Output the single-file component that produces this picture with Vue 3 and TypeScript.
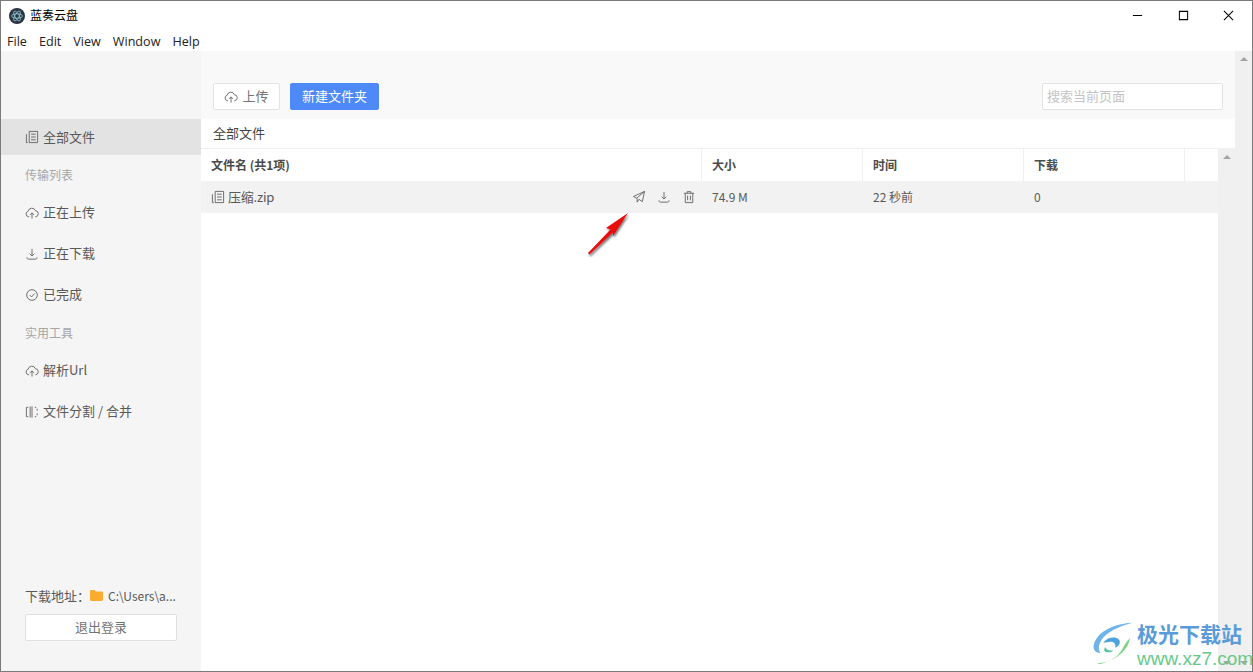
<script setup lang="ts">
interface NavItem {
  label: string
  icon?: string
  title?: boolean
  active?: boolean
}

const menus = ['File', 'Edit', 'View', 'Window', 'Help']

const navItems: NavItem[] = [
  { label: '全部文件', icon: 'file', active: true },
  { label: '传输列表', title: true },
  { label: '正在上传', icon: 'upload' },
  { label: '正在下载', icon: 'download' },
  { label: '已完成', icon: 'done' },
  { label: '实用工具', title: true },
  { label: '解析Url', icon: 'upload' },
  { label: '文件分割 / 合并', icon: 'split' },
]

const icons: Record<string, string> = {
  file: 'M1.500 4.500v9h1.500M4.500 1.500h9v12h-9zM6.500 4.500h5M6.500 7.500h5M6.500 10.500h5',
  upload: 'M4.500 11.500H4a3 3 0 0 1-.6-5.900 4 4 0 0 1 7.700-.6 3.300 3.300 0 0 1 .6 6.500h-.7M7.500 13.500V7.500M5.400 9.500l2.100-2.200 2.100 2.200',
  download: 'M7.500 2v7.500M5 7.200l2.500 2.500L10 7.200M2 11c0 1.500 1 2 2 2h7c1 0 2-.5 2-2',
  done: 'M7.500 1.800a5.700 5.700 0 1 0 0 11.400 5.700 5.700 0 0 0 0-11.400zM5 7.600l2 2 3.200-3.600',
  split: 'M3.500 2.500h-2v10h2M5.500 1.500v12M7.500 1.500v12M10.500 2.500h1.500M10.500 12.500h1.500M13 4v2M13 9v2',
  send: 'M13.500 1.500 1.500 7l3.500 1.800L13.500 1.500 11 12.500 7.500 10 5.500 13V9',
  trash: 'M2 3.500h11M5.500 3.500V1.800h4v1.700M3.500 3.500v10h8v-10M6 6v5M9 6v5',
}
</script>

<template>
  <div class="window">
    <header class="titlebar">
      <svg class="app-logo" viewBox="0 0 16 16">
        <circle cx="8" cy="8" r="8" fill="#2b3240" />
        <g fill="none" stroke="#9fdcea" stroke-width=".7">
          <ellipse cx="8" cy="8" rx="5.500" ry="2.200" />
          <ellipse cx="8" cy="8" rx="5.500" ry="2.200" transform="rotate(60 8 8)" />
          <ellipse cx="8" cy="8" rx="5.500" ry="2.200" transform="rotate(120 8 8)" />
        </g>
      </svg>
      <span class="app-name">蓝奏云盘</span>
      <div class="win-controls">
        <svg viewBox="0 0 12 12"><path d="M1 6h10" /></svg>
        <svg viewBox="0 0 12 12"><path d="M1.500 1.500h9v9h-9z" /></svg>
        <svg viewBox="0 0 12 12"><path d="M1 1l10 10M11 1 1 11" /></svg>
      </div>
    </header>
    <nav class="menubar">
      <span v-for="menu in menus" :key="menu">{{ menu }}</span>
    </nav>

    <div class="body">
      <aside class="sidebar">
        <ul class="nav">
          <li
            v-for="item in navItems"
            :key="item.label"
            :class="{ 'nav__title': item.title, 'nav__item': !item.title, 'nav__item--active': item.active }"
          >
            <svg v-if="item.icon" class="icon" viewBox="0 0 15 15"><path :d="icons[item.icon]" /></svg>
            {{ item.label }}
          </li>
        </ul>
        <div class="sidebar__footer">
          <div class="path">
            <span>下载地址：</span>
            <svg class="folder" viewBox="0 0 13 11">
              <path d="M0 1.200C0 .5.5 0 1.200 0h3.200l1.300 1.500h6.100c.7 0 1.200.5 1.200 1.200v7c0 .7-.5 1.200-1.200 1.200H1.200C.5 10.900 0 10.400 0 9.700z" fill="#fbab2e" />
            </svg>
            <span class="path__value">C:\Users\a...</span>
          </div>
          <button class="logout">退出登录</button>
        </div>
      </aside>

      <main class="main">
        <div class="toolbar">
          <button class="btn">
            <svg class="icon" viewBox="0 0 15 15"><path :d="icons.upload" /></svg>
            上传
          </button>
          <button class="btn btn--primary">新建文件夹</button>
          <input class="search" placeholder="搜索当前页面" />
        </div>
        <div class="crumb">全部文件</div>

        <div class="table-wrap">
          <div class="table">
            <div class="row row--head">
              <div class="cell cell--name">文件名 (共1项)</div>
              <div class="cell cell--col">大小</div>
              <div class="cell cell--col">时间</div>
              <div class="cell cell--col">下载</div>
              <div class="cell cell--end"></div>
            </div>
            <div class="row row--file">
              <div class="cell cell--name">
                <svg class="icon" viewBox="0 0 15 15"><path :d="icons.file" /></svg>
                <span class="file-name">压缩.zip</span>
                <div class="actions">
                  <svg class="icon" viewBox="0 0 15 15"><path :d="icons.send" /></svg>
                  <svg class="icon" viewBox="0 0 15 15"><path :d="icons.download" /></svg>
                  <svg class="icon" viewBox="0 0 15 15"><path :d="icons.trash" /></svg>
                </div>
              </div>
              <div class="cell cell--col">74.9 M</div>
              <div class="cell cell--col">22 秒前</div>
              <div class="cell cell--col">0</div>
              <div class="cell cell--end"></div>
            </div>
          </div>
          <div class="scrollbar">
            <i class="arrow arrow--up"></i>
            <i class="arrow arrow--down"></i>
          </div>
        </div>
      </main>

      <div class="scrollbar scrollbar--outer">
        <i class="arrow arrow--up"></i>
        <i class="arrow arrow--down"></i>
      </div>
    </div>

    <!-- red annotation arrow drawn over the screenshot -->
    <svg class="annotation" viewBox="0 0 50 50">
      <defs>
        <filter id="arrow-shadow"><feDropShadow dx="1" dy="2" stdDeviation="1.200" flood-color="#000" flood-opacity=".55" /></filter>
      </defs>
      <path d="M42 6 20 21l4.500 1.500L2 46l1.500 1.500L27 25.500l0 3.500z" fill="#e80c0c" filter="url(#arrow-shadow)" />
    </svg>

    <!-- site watermark -->
    <div class="watermark">
      <svg class="watermark__logo" viewBox="0 0 50 50">
        <path d="M47 1C28 2 6 10 2 27c-1 6 3 9 8 9C5 31 9 18 22 11 30 6 40 3 47 1z" fill="#6fb3e8" />
        <path d="M44 19c-1 12-14 24-31 29-3 1-5 1-7 0 17 0 26-10 30-18 2-4 5-8 8-11z" fill="#7fd28a" />
        <path d="M13 24c4-6 14-8 18-4 3 3 1 8-4 10 1-4-1-7-5-7-3 0-6 1-9 1z" fill="#4fa3dc" />
        <path d="M15 29c2 3 6 5 10 4-3 3-9 3-11 0z" fill="#5cc2a0" />
      </svg>
      <div class="watermark__text">
        <div class="watermark__name">极光下载站</div>
        <div class="watermark__url">www.xz7.com</div>
      </div>
    </div>
  </div>
</template>

<style scoped>
.window {
  position: relative;
  display: flex;
  flex-direction: column;
  box-sizing: border-box;
  width: 1253px;
  height: 672px;
  overflow: hidden;
  border: 1px solid #7a7a7a;
  background: #fff;
  font-family: "Noto Sans CJK SC", sans-serif;
  font-size: 13px;
  color: #595959;
}

.titlebar {
  display: flex;
  align-items: center;
  flex: none;
  height: 29px;
  padding-left: 8px;
  color: #000;
  font-size: 12px;
}

.app-logo {
  width: 16px;
  height: 16px;
  margin-right: 5px;
}

.app-name {
  padding-bottom: 2px;
}

.win-controls {
  display: flex;
  align-items: center;
  gap: 34.500px;
  margin-left: auto;
  padding-right: 18px;
}

.win-controls svg {
  width: 11px;
  height: 11px;
  fill: none;
  stroke: #000;
  stroke-width: 1.100;
}

.menubar {
  display: flex;
  flex: none;
  gap: 12px;
  align-items: center;
  box-sizing: border-box;
  height: 21px;
  padding: 1px 0 0 6px;
  font-family: "Open Sans", sans-serif;
  font-size: 12.600px;
  color: #222;
}

.body {
  display: flex;
  flex: 1;
  min-height: 0;
}

.sidebar {
  display: flex;
  flex-direction: column;
  flex: none;
  width: 200px;
  padding-top: 68px;
  box-sizing: border-box;
  background: #f5f5f5;
}

.nav {
  margin: 0;
  padding: 0;
  list-style: none;
}

.nav__item {
  display: flex;
  align-items: center;
  gap: 4px;
  box-sizing: border-box;
  height: 41px;
  padding: 0 0 2px 24px;
}

.nav__item .icon {
  margin-top: 2px;
}

.nav__item--active {
  height: 36px;
  margin-bottom: 2px;
  background: #e3e3e3;
}

.nav__title {
  display: flex;
  align-items: center;
  box-sizing: border-box;
  height: 35px;
  padding: 0 0 1px 24px;
  font-size: 12px;
  color: #a6a6a6;
}

.icon {
  flex: none;
  width: 14px;
  height: 14px;
  fill: none;
  stroke: #666;
  stroke-width: 1;
}

.sidebar__footer {
  margin-top: auto;
  padding: 0 23px 30px 24px;
}

.path {
  display: flex;
  align-items: center;
  box-sizing: border-box;
  height: 20px;
  margin-bottom: 8px;
  padding-bottom: 2px;
  white-space: nowrap;
}

.folder {
  width: 13px;
  height: 11px;
  margin-right: 5px;
}

.path__value {
  font-size: 12px;
}

.logout {
  display: block;
  width: 152px;
  height: 27px;
  padding: 0 0 2px;
  border: 1px solid #e0e0e0;
  border-radius: 2px;
  background: #fff;
  color: #737373;
  font: inherit;
}

.main {
  display: flex;
  flex-direction: column;
  flex: 1;
  min-width: 0;
}

.toolbar {
  display: flex;
  align-items: flex-start;
  flex: none;
  height: 68px;
  padding: 32px 12px 0;
  box-sizing: border-box;
  background: #f9f9f9;
}

.btn {
  display: flex;
  align-items: center;
  justify-content: center;
  gap: 4px;
  width: 67px;
  height: 27px;
  padding: 0 0 2px;
  border: 1px solid #e3e3e3;
  border-radius: 2px;
  background: #fff;
  color: #737373;
  font: inherit;
}

.btn .icon {
  margin-top: 2px;
}

.btn--primary {
  width: 89px;
  margin-left: 10px;
  border-color: #4d8af7;
  background: #4d8af7;
  color: #fff;
}

.search {
  width: 181px;
  height: 27px;
  margin-left: auto;
  padding: 0 4px 2px;
  box-sizing: border-box;
  border: 1px solid #e3e3e3;
  border-radius: 2px;
  background: #fff;
  font: inherit;
}

.search::placeholder {
  color: #c4c4c4;
}

.crumb {
  display: flex;
  align-items: center;
  flex: none;
  box-sizing: border-box;
  height: 30px;
  padding: 0 0 2px 12px;
  border-bottom: 1px solid #f0f0f0;
  color: #444;
}

.table-wrap {
  display: flex;
  flex: 1;
  min-height: 0;
}

.table {
  flex: 1;
  min-width: 0;
}

.row {
  display: flex;
  height: 32px;
}

.row--head {
  font-size: 12px;
  font-weight: 700;
  color: #4a4a4a;
}

.row--head .cell + .cell {
  box-shadow: inset 1px 0 0 #f0f0f0;
}

.row--file {
  background: #f2f2f2;
  font-size: 12px;
}

.cell {
  display: flex;
  align-items: center;
  box-sizing: border-box;
  padding-bottom: 2px;
}

.cell .icon {
  margin-top: 2px;
}

.cell--name {
  width: 500px;
  padding-left: 10px;
}

.cell--col {
  width: 161px;
  padding-left: 11px;
}

.cell--end {
  flex: 1;
}

.row--file .cell--name > .icon {
  margin-right: 3px;
}

.file-name {
  font-size: 13px;
  letter-spacing: -0.2px;
}

.actions {
  display: flex;
  gap: 11px;
  margin-left: auto;
  padding-right: 5px;
}

.scrollbar {
  display: flex;
  flex-direction: column;
  align-items: center;
  justify-content: space-between;
  flex: none;
  width: 17px;
  padding: 6px 0;
  box-sizing: border-box;
  background: #f0f0f0;
}

.arrow {
  width: 0;
  height: 0;
  border-left: 4px solid transparent;
  border-right: 4px solid transparent;
}

.arrow--up {
  border-bottom: 4px solid #a3a3a3;
}

.arrow--down {
  border-top: 4px solid #a3a3a3;
}

.annotation {
  position: absolute;
  left: 585px;
  top: 206px;
  width: 50px;
  height: 50px;
}

.watermark {
  position: absolute;
  right: 10px;
  bottom: 2px;
  display: flex;
  align-items: center;
  gap: 2px;
  width: 150px;
}

.watermark__logo {
  width: 43px;
  height: 43px;
  flex: none;
  margin-bottom: 4px;
}

.watermark__name {
  font-size: 21px;
  line-height: 24px;
  font-weight: 700;
  color: #5a9bd8;
}

.watermark__url {
  margin-top: 4px;
  font-family: "Liberation Sans", sans-serif;
  font-size: 19px;
  line-height: 20px;
  color: #68c98a;
}
</style>
